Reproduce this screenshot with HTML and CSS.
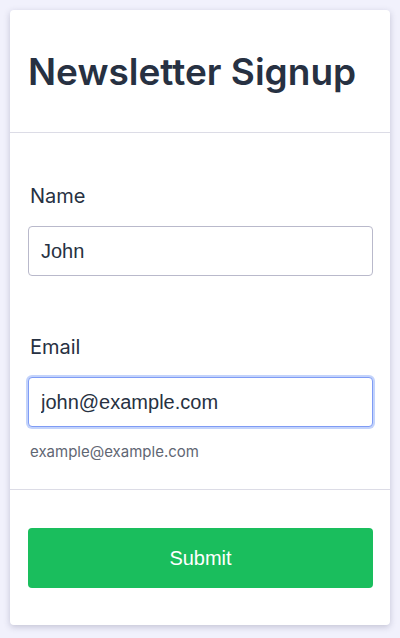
FILE: index.html
```html
<!DOCTYPE html>
<html>
<head>
<meta charset="utf-8">
<link rel="stylesheet" href="styles.css">
</head>
<body>
<div class="card">
  <div class="card-header">
    <h1 class="title">Newsletter Signup</h1>
  </div>
  <div class="card-body">
    <div class="field">
      <label class="label" for="name">Name</label>
      <input class="input" id="name" type="text" value="John">
    </div>
    <div class="field field-email">
      <label class="label" for="email">Email</label>
      <input class="input input-focus" id="email" type="email" value="john@example.com">
      <div class="hint">example@example.com</div>
    </div>
  </div>
  <div class="card-footer">
    <button class="btn" type="button">Submit</button>
  </div>
</div>
</body>
</html>
```
FILE: styles.css
```css
html, body {
  margin: 0;
  padding: 0;
}
body {
  background: #f1f1fc;
  padding: 10px;
  font-family: Inter, "Liberation Sans", sans-serif;
  color: #273142;
}
.card {
  background: #ffffff;
  border-radius: 4px;
  box-shadow: 0 2px 6px rgba(60, 60, 100, 0.25);
  width: 380px;
}
.card-header {
  height: 123px;
  display: flex;
  align-items: center;
  padding: 0 18px;
  border-bottom: 1px solid #dcdce6;
  box-sizing: border-box;
}
.title {
  margin: 0;
  font-size: 37px;
  font-weight: 600;
  color: #273142;
  letter-spacing: 0;
}
.card-body {
  padding: 48px 17px 28px 18px;
  border-bottom: 1px solid #dcdce6;
}
.field {
  display: flex;
  flex-direction: column;
}
.field-email {
  margin-top: 56px;
}
.label {
  font-size: 20px;
  line-height: 28px;
  margin-left: 2px;
  padding-top: 1px;
  margin-bottom: 16px;
  color: #273142;
}
.input {
  box-sizing: border-box;
  height: 50px;
  width: 100%;
  border: 1px solid #b9b9cb;
  border-radius: 4px;
  padding: 0 12px;
  font-family: "Liberation Sans", Arial, sans-serif;
  font-size: 20px;
  color: #273142;
  background: #fff;
  outline: none;
}
.input-focus {
  border-color: #7f9cf5;
  box-shadow: 0 0 0 2px #c3d3fb;
}
.hint {
  margin-top: 16px;
  margin-left: 2px;
  font-size: 15px;
  line-height: 18px;
  color: #5f6673;
}
.card-footer {
  padding: 38px 17px 37px 18px;
}
.btn {
  display: block;
  width: 100%;
  height: 60px;
  border: none;
  border-radius: 4px;
  background: #1abe5d;
  color: #ffffff;
  font-family: "Liberation Sans", Arial, sans-serif;
  font-size: 20px;
}
```
